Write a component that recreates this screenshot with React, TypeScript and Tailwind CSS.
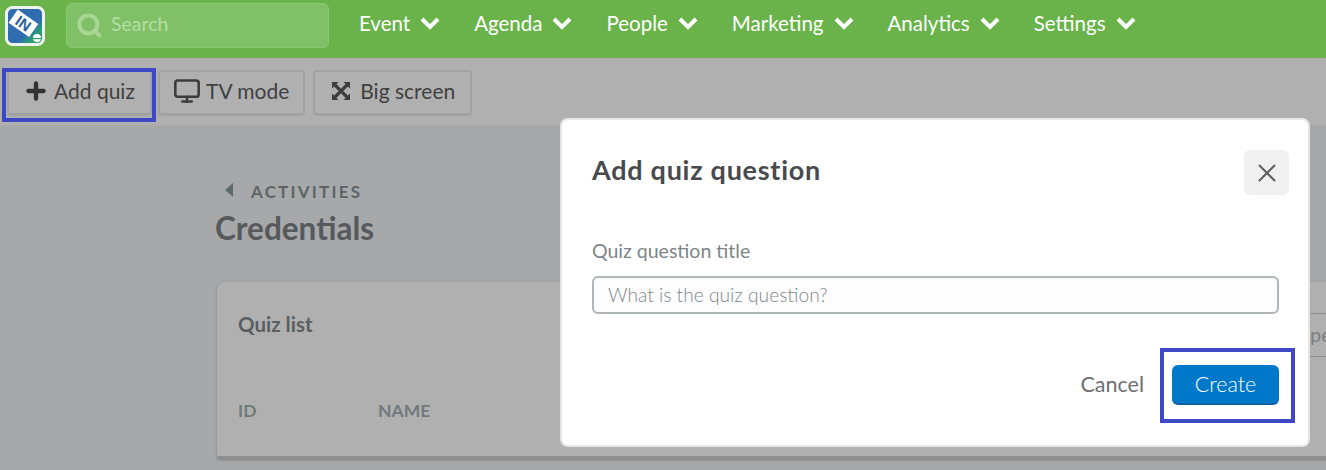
import { Search, Plus, Monitor, X } from "lucide-react";

const NAV_ITEMS = ["Event", "Agenda", "People", "Marketing", "Analytics", "Settings"];

function Logo() {
  return (
    <svg width="40" height="40" viewBox="0 0 40 40">
      <defs>
        <linearGradient id="logo-bg" x1="0" y1="0" x2="1" y2="1">
          <stop offset="0.62" stopColor="#2f6db0" />
          <stop offset="0.76" stopColor="#2a9a78" />
          <stop offset="1" stopColor="#36a862" />
        </linearGradient>
      </defs>
      <rect x="1.5" y="1.5" width="37" height="37" rx="6" fill="url(#logo-bg)" stroke="#eef3ee" strokeWidth="3" />
      <g transform="rotate(35 18 17)">
        <rect x="6" y="9" width="25" height="16" fill="#fff" />
        <text x="18.500" y="22.500" textAnchor="middle" fontSize="15" fontWeight="900" fill="#2f5f9a" fontFamily="Liberation Sans, sans-serif">IN</text>
      </g>
      <circle cx="32" cy="32" r="4" fill="#fff" />
      <rect x="27" y="32" width="10" height="1.2" fill="#2f9a70" />
    </svg>
  );
}

function BigScreenIcon() {
  return (
    <svg width="20" height="20" viewBox="0 0 20 20" fill="#3c3c3c">
      <path d="M1 1h6.500L5.400 3.100 10 7.700l4.600-4.600L12.500 1H19v6.500l-2.100-2.100L12.300 10l4.600 4.600 2.100-2.100V19h-6.500l2.100-2.100L10 12.300l-4.600 4.600L7.500 19H1v-6.500l2.100 2.100L7.700 10 3.100 5.400 1 7.500z" />
    </svg>
  );
}

function NavChevron() {
  return (
    <svg width="20" height="14" viewBox="0 0 20 14" fill="none" stroke="currentColor" strokeWidth="4">
      <path d="M2 3l8 8 8-8" />
    </svg>
  );
}

function ToolbarButton({ children }: { children: React.ReactNode }) {
  return (
    <button className="h-[46px] flex items-center rounded border-2 border-[#a2a2a2] border-b-[3px] bg-[#b0b0b0] text-[21px] text-[#3f3f3f] whitespace-nowrap">
      {children}
    </button>
  );
}

export default function App() {
  return (
    <div
      className="relative h-[470px] w-[1326px] overflow-hidden bg-[#a6a8aa]"
      style={{ fontFamily: "Lato, sans-serif" }}
    >
      {/* Top nav */}
      <header className="h-[58px] bg-[#69b34a] flex items-start">
        <div className="ml-[5px] mt-[6px]">
          <Logo />
        </div>
        <div className="ml-[21px] mt-[3px] h-[45px] w-[263px] rounded-md bg-[#80c066] border border-[#8ac772] flex items-center pl-[9px]">
          <Search size={27} strokeWidth={3.5} className="text-[#a6d892]" />
          <span className="ml-[8px] mb-[4px] text-[19.5px] text-[#b5dea4]">Search</span>
        </div>
        <nav className="ml-[30px] mt-[8px] flex items-center gap-[34px] text-white text-[20.5px]">
          {NAV_ITEMS.map((item) => (
            <div key={item} className="flex items-center gap-[10px]">
              <span>{item}</span>
              <NavChevron />
            </div>
          ))}
        </nav>
      </header>

      {/* Toolbar */}
      <div className="h-[67px] bg-[#b0b0b0] flex items-start pt-[12px] pl-[7px]">
        <div className="w-[143px]">
          <ToolbarButton>
            <span className="flex items-center pl-[14px] pr-[15px] mb-[3px]">
              <Plus size={26} strokeWidth={4} className="text-[#333]" />
              <span className="ml-[5px]">Add quiz</span>
            </span>
          </ToolbarButton>
        </div>
        <div className="ml-[8px]">
          <ToolbarButton>
            <span className="flex items-center pl-[13px] pr-[14px] mb-[3px]">
              <Monitor size={28} strokeWidth={2.2} className="text-[#3c3c3c]" />
              <span className="ml-[5px]">TV mode</span>
            </span>
          </ToolbarButton>
        </div>
        <div className="ml-[8px]">
          <ToolbarButton>
            <span className="flex items-center pl-[16px] pr-[15px] mb-[3px]">
              <BigScreenIcon />
              <span className="ml-[9px]">Big screen</span>
            </span>
          </ToolbarButton>
        </div>
      </div>

      {/* Page body */}
      <main className="pl-[216px] pt-[55px]">
        <div className="flex items-center pl-[9px] h-[24px]">
          <span className="h-0 w-0 border-y-[7px] border-y-transparent border-r-[8px] border-r-[#5f6a6d] mb-[4px]" />
          <span className="ml-[18px] text-[17px] font-bold tracking-[0.13em] text-[#5c6466]">ACTIVITIES</span>
        </div>
        <h1 className="text-[31.5px] leading-[40px] font-bold text-[#575a5c] mt-[4px] ml-[-1px]">Credentials</h1>
        <section className="mt-[34px] h-[177px] w-[1200px] ml-[1px] rounded-t-lg rounded-b-sm bg-[#b0b0b0] border-b-[3px] border-b-[#8f8f8f] shadow-[0_1px_3px_rgba(0,0,0,0.25)] pl-[21px] pt-[29px]">
          <div className="flex justify-between">
            <h2 className="text-[20.5px] leading-[26px] font-bold text-[#5a5f61]">Quiz list</h2>
            <div className="mt-[2px] mr-[90px] h-[44px] w-[200px] border border-[#8e8e8e] pl-[182px] text-[20px] leading-[40px] text-[#7d7d7d]">
              pe
            </div>
          </div>
          <div className="mt-[41px] flex text-[17.5px] font-bold text-[#72797c]">
            <span className="w-[140px]">ID</span>
            <span>NAME</span>
          </div>
        </section>
      </main>

      {/* Highlight around Add quiz */}
      <div className="absolute left-[2px] top-[68px] h-[54px] w-[154px] border-[4px] border-[#3f48c4]" />

      {/* Modal */}
      <div className="absolute left-[560px] top-[118px] h-[329px] w-[750px] rounded-lg bg-white border-2 border-[#e4e6e6] border-t-[#e8e8e8] pl-[30px] pr-[19px]">
        <div className="flex items-start justify-between pt-[30px]">
          <h3 className="mt-[2px] text-[27px] leading-[36px] font-bold tracking-[0.027em] text-[#484b4d]">Add quiz question</h3>
          <button className="h-[45px] w-[45px] rounded-md bg-[#f0f0f0] flex items-center justify-center text-[#5f5f5f]">
            <X size={30} strokeWidth={1.6} />
          </button>
        </div>
        <div className="mt-[43px] text-[19.5px] leading-[26px] text-[#7c8689]">Quiz question title</div>
        <div className="mt-[12px] h-[38px] w-[687px] rounded-md border-2 border-[#aeb6b9] bg-[#fdfdfd] pl-[14px] text-[19.2px] leading-[34px] font-light text-[#80888b]">
          What is the quiz question?
        </div>
        <div className="mt-[51px] flex items-center justify-end pr-[10px]">
          <span className="mb-[2px] text-[21.5px] text-[#6c7072]">Cancel</span>
          <button className="ml-[28px] h-[40px] w-[107px] rounded-md bg-[#0078c9] border-b-2 border-[#0a64a4] text-[21.5px] font-light text-white">
            Create
          </button>
        </div>
      </div>

      {/* Highlight around Create */}
      <div className="absolute left-[1160px] top-[348px] h-[75px] w-[135px] border-[4px] border-[#3f48c4]" />
    </div>
  );
}
